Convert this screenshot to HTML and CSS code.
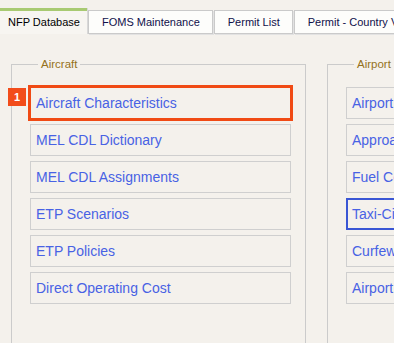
FILE: index.html
```html
<!DOCTYPE html>
<html>
<head>
<meta charset="utf-8">
<link rel="stylesheet" href="styles.css">
</head>
<body>
<div class="tabs">
  <div class="tab active">NFP Database</div>
  <div class="tab">FOMS Maintenance</div>
  <div class="tab">Permit List</div>
  <div class="tab">Permit - Country Validity</div>
</div>
<div class="panels">
  <fieldset class="group aircraft">
    <legend>Aircraft</legend>
    <div class="list">
      <a class="item highlighted">Aircraft Characteristics<span class="badge">1</span></a>
      <a class="item">MEL CDL Dictionary</a>
      <a class="item">MEL CDL Assignments</a>
      <a class="item">ETP Scenarios</a>
      <a class="item">ETP Policies</a>
      <a class="item">Direct Operating Cost</a>
    </div>
  </fieldset>
  <fieldset class="group airport">
    <legend>Airport</legend>
    <div class="list">
      <a class="item">Airport Characteristics</a>
      <a class="item">Approach Procedures</a>
      <a class="item">Fuel Cost</a>
      <a class="item focused">Taxi-Circuits</a>
      <a class="item">Curfews</a>
      <a class="item">Airport Charges</a>
    </div>
  </fieldset>
</div>
</body>
</html>
```

FILE: styles.css
```css
html, body {
  margin: 0;
  padding: 0;
}
body {
  width: 394px;
  height: 343px;
  overflow: hidden;
  background: #f4f1ec;
  font-family: "Liberation Sans", Arial, sans-serif;
}
.tabs {
  display: flex;
  align-items: flex-end;
  gap: 1px;
  padding-top: 8px;
  white-space: nowrap;
}
.tab {
  flex: none;
  height: 22px;
  line-height: 22px;
  padding: 0 12px 0 13px;
  font-size: 11px;
  color: #10104a;
  background: #fdfdfb;
  border: 1px solid #cacaca;
  box-shadow: 1px 1px 0 #e2e2e2;
}
.tab.active {
  border: none;
  border-top: 3px solid #a8ca72;
  padding: 0 7px 0 8px;
  height: 23px;
  background: #f7f5f1;
  color: #000;
  box-shadow: 1px 0 0 #d8d8d8;
}
.panels {
  display: flex;
  gap: 21px;
  margin: 23px 0 0 11px;
}
.group {
  flex: none;
  margin: 0;
  border: 1px solid #cbcbcb;
  padding: 16px 14px 80px 18px;
  min-width: 0;
}
.group.aircraft {
  width: 261px;
}
.group.airport {
  width: 300px;
}
.group legend {
  font-size: 11.5px;
  line-height: 14px;
  color: #94711c;
  padding: 0 3px;
  margin-left: 8px;
}
.list {
  display: flex;
  flex-direction: column;
  gap: 5px;
}
.item {
  position: relative;
  display: block;
  height: 30px;
  line-height: 30px;
  padding: 0 5px;
  border: 1px solid #cfcfcf;
  font-size: 14px;
  color: #4862e4;
  white-space: nowrap;
}
.item.highlighted {
  border-color: #f04a14;
  box-shadow: 0 0 0 2px #f04a14;
}
.item.focused {
  border-color: #3a56d4;
  box-shadow: inset 0 0 0 1px #3a56d4;
}
.badge {
  position: absolute;
  left: -23px;
  top: 0;
  width: 18px;
  height: 18px;
  line-height: 18px;
  background: #f24c1a;
  color: #fff;
  font-size: 11px;
  font-weight: bold;
  text-align: center;
}
```
